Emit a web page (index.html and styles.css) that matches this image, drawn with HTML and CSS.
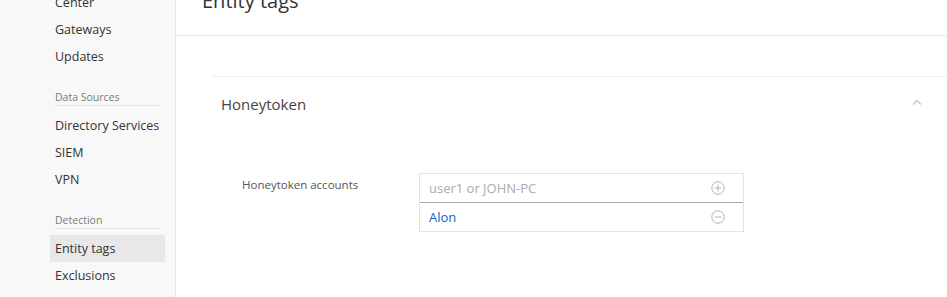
FILE: index.html
```html
<!DOCTYPE html>
<html lang="en">
<head>
  <meta charset="UTF-8" />
  <title>Entity tags</title>
  <link rel="stylesheet" href="styles.css">
</head>
<body>
  <div class="layout">
    <!-- sol menü -->
    <nav class="sidebar">
      <ul class="nav-list">
        <li class="nav-item">Center</li>
        <li class="nav-item">Gateways</li>
        <li class="nav-item">Updates</li>
      </ul>
      <div class="nav-group">Data Sources</div>
      <ul class="nav-list">
        <li class="nav-item">Directory Services</li>
        <li class="nav-item">SIEM</li>
        <li class="nav-item">VPN</li>
      </ul>
      <div class="nav-group">Detection</div>
      <ul class="nav-list">
        <li class="nav-item active">Entity tags</li>
        <li class="nav-item">Exclusions</li>
      </ul>
    </nav>

    <main class="content">
      <div class="page-header">
        <h1 class="page-title">Entity tags</h1>
      </div>

      <section class="panel">
        <div class="panel-header">
          <span class="panel-title">Honeytoken</span>
          <svg class="chevron" width="10" height="6" viewBox="0 0 10 6">
            <path d="M1 5.5 L5 1.5 L9 5.5" fill="none" stroke="#c8c8c8" stroke-width="1.4"/>
          </svg>
        </div>

        <div class="field">
          <label class="field-label">Honeytoken accounts</label>
          <div class="tag-input">
            <div class="tag-row tag-row-new">
              <span class="placeholder">user1 or JOHN-PC</span>
              <svg class="row-icon" width="14" height="14" viewBox="0 0 14 14">
                <circle cx="7" cy="7" r="6.2" fill="none" stroke="#b4b4b4" stroke-width="1"/>
                <path d="M7 3.6 V10.4 M3.6 7 H10.4" stroke="#b4b4b4" stroke-width="1"/>
              </svg>
            </div>
            <div class="tag-row">
              <span class="tag-value">Alon</span>
              <svg class="row-icon" width="14" height="14" viewBox="0 0 14 14">
                <circle cx="7" cy="7" r="6.2" fill="none" stroke="#b4b4b4" stroke-width="1"/>
                <path d="M3.6 7 H10.4" stroke="#b4b4b4" stroke-width="1"/>
              </svg>
            </div>
          </div>
        </div>
      </section>
    </main>
  </div>
</body>
</html>
```

FILE: styles.css
```css
* {
  box-sizing: border-box;
  margin: 0;
  padding: 0;
}

html, body {
  height: 100%;
  overflow: hidden;
  font-family: 'Open Sans', 'Noto Sans', sans-serif;
  color: #333;
  background: #fff;
}

.layout {
  display: flex;
  height: 100%;
}

/* Sol menü */
.sidebar {
  width: 176px;
  flex-shrink: 0;
  background: #f8f8f9;
  border-right: 1px solid #e6e6e8;
  padding-left: 50px;
}

.nav-list {
  list-style: none;
  width: 115px;
}

.nav-list:first-child {
  margin-top: -11px;
}

.nav-item {
  height: 27px;
  line-height: 27px;
  padding-left: 5px;
  font-size: 12.5px;
  color: #333;
  white-space: nowrap;
}

.nav-item.active {
  background: #e8e8e9;
}

.nav-group {
  width: 105px;
  margin: 20px 5px 6px 5px;
  line-height: 15px;
  font-size: 10.5px;
  color: #7a7a7a;
  border-bottom: 1px solid #e4e4e6;
}

/* İçerik */
.content {
  flex: 1;
  min-width: 0;
}

.page-header {
  display: flex;
  align-items: flex-start;
  height: 36px;
  border-bottom: 1px solid #e9e9e9;
  padding-left: 26px;
}

.page-title {
  margin-top: -13px;
  font-size: 20px;
  font-weight: 400;
  line-height: 28px;
  color: #333;
}

.panel {
  margin-top: 40px;
  margin-left: 35px;
  border-top: 1px solid #efefef;
}

.panel-header {
  display: flex;
  justify-content: space-between;
  align-items: center;
  height: 53px;
  padding: 0 25px 0 10px;
}

.panel-title {
  font-size: 15px;
  color: #444;
}

.chevron {
  margin-top: -3px;
}

.field {
  display: flex;
  margin-top: 43px;
  padding-left: 31px;
}

.field-label {
  width: 177px;
  flex-shrink: 0;
  padding-top: 4px;
  font-size: 11.5px;
  color: #555;
}

.tag-input {
  width: 325px;
  border: 1px solid #e3e3e3;
}

.tag-row {
  display: flex;
  justify-content: space-between;
  align-items: center;
  height: 28px;
  padding: 0 18px 0 9px;
  font-size: 13px;
}

.tag-row-new {
  height: 29px;
  border-bottom: 1px solid #a9a9a9;
}

.placeholder {
  color: #aaa;
}

.tag-value {
  color: #0764c7;
}
```
